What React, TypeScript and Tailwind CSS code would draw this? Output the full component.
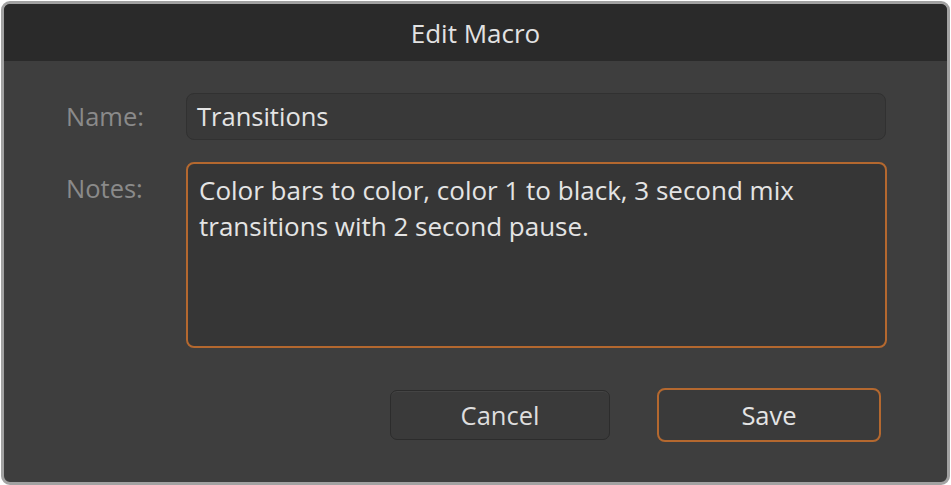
export default function App() {
  return (
    <div className="min-h-screen bg-white pt-px pl-px" style={{ fontFamily: '"Open Sans", "Noto Sans", sans-serif' }}>
      <div className="w-[949px] h-[484px] border-[3px] border-[#a2a2a2] rounded-[9px] overflow-hidden bg-[#3e3e3e] flex flex-col">
        {/* Header */}
        <div className="h-[57px] bg-[#2a2a2a] flex items-center justify-center shrink-0">
          <h1 className="text-[26px] text-[#e2e2e2] leading-none">Edit Macro</h1>
        </div>

        {/* Body */}
        <div className="flex-1 pt-[32px] pl-[62px]">
          <div className="flex items-center">
            <span className="w-[120px] text-[25.5px] text-[#8a8a8a] leading-none">Name:</span>
            <div className="w-[700px] h-[47px] rounded-[8px] bg-[#393939] border border-[#313131] flex items-center pl-[10px]">
              <span className="text-[25.5px] text-[#e4e4e4] leading-none">Transitions</span>
            </div>
          </div>

          <div className="flex mt-[22px]">
            <span className="w-[120px] text-[25.5px] text-[#8a8a8a] leading-[36px] pt-[8px]">Notes:</span>
            <div className="w-[701px] h-[186px] rounded-[8px] bg-[#363636] border-2 border-[#b4682f] pl-[11px] pt-[8px] pr-4">
              <p className="text-[26px] leading-[36px] text-[#e4e4e4]">
                Color bars to color, color 1 to black, 3 second mix transitions with 2 second pause.
              </p>
            </div>
          </div>

          <div className="flex items-center mt-[40px] pl-[324px] gap-[47px]">
            <button className="w-[220px] h-[50px] rounded-[7px] bg-[#3a3a3a] border border-[#2c2c2c] text-[25.5px] text-[#dedede] shadow-[inset_0_1px_0_#444]">
              Cancel
            </button>
            <button className="w-[224px] h-[54px] rounded-[8px] bg-[#3a3a3a] border-2 border-[#b4682f] text-[25.5px] text-[#e4e4e4]">
              Save
            </button>
          </div>
        </div>
      </div>
    </div>
  );
}
